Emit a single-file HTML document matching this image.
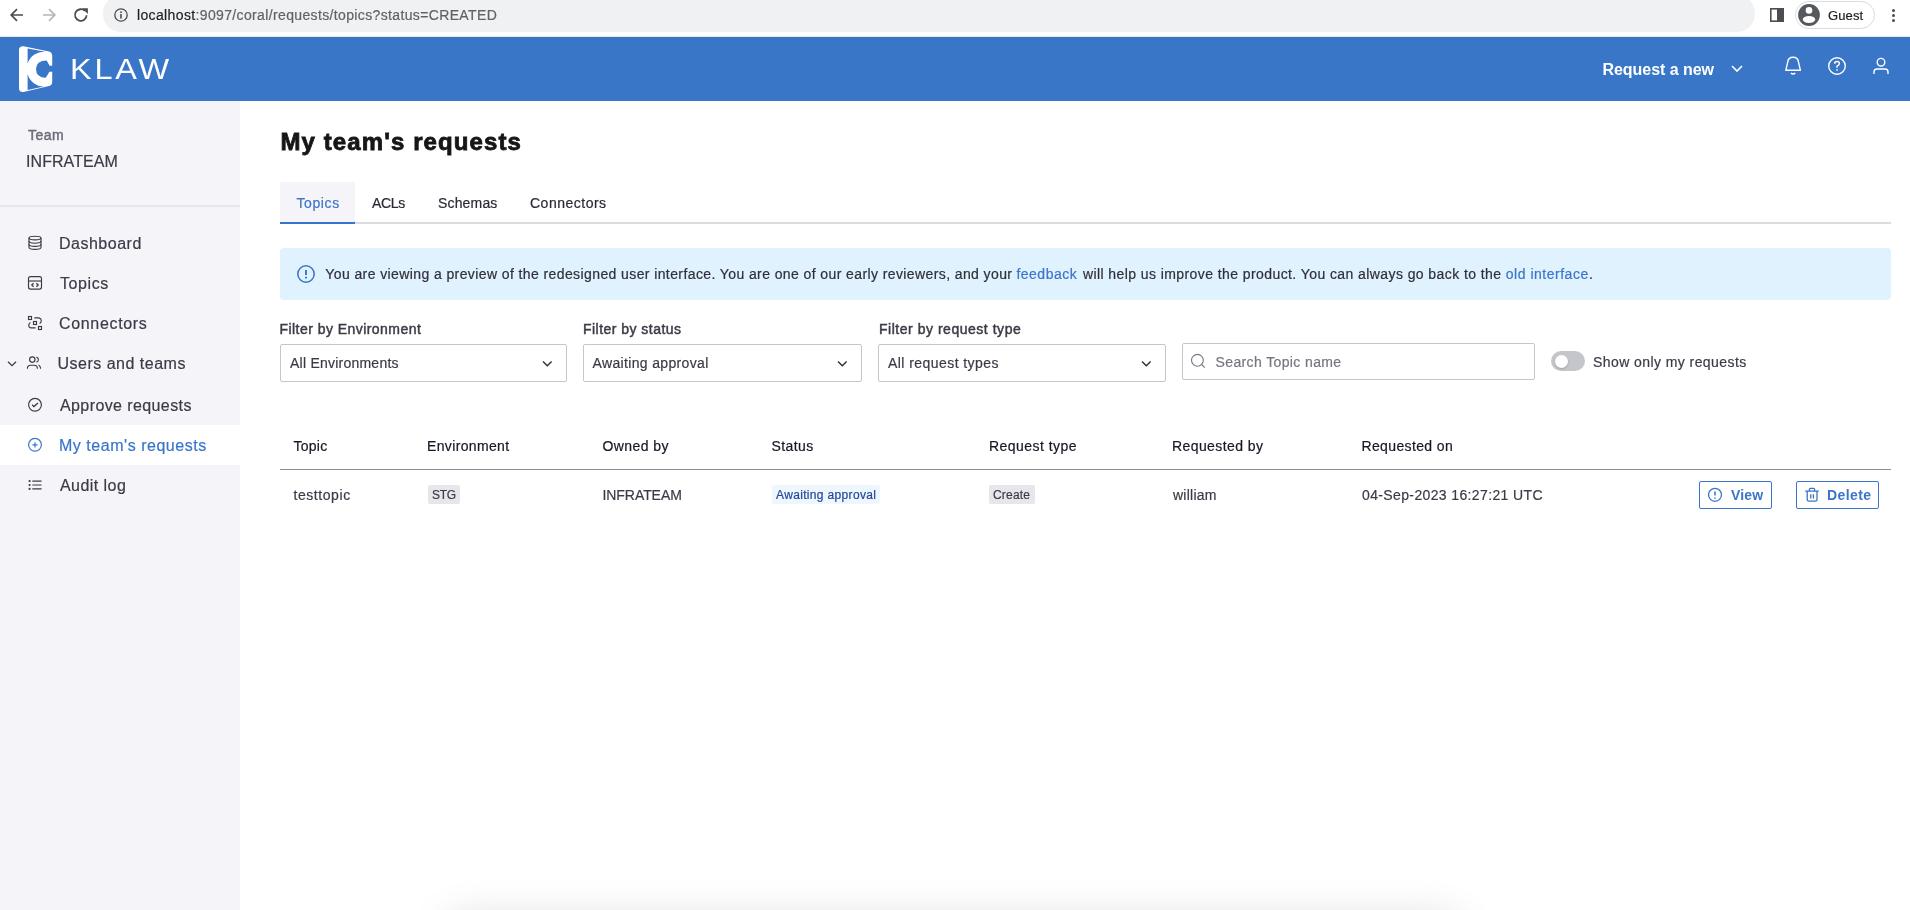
<!DOCTYPE html>
<html><head><meta charset="utf-8">
<style>
*{margin:0;padding:0;box-sizing:border-box}
html,body{width:1910px;height:910px;overflow:hidden;background:#fff;font-family:"Liberation Sans",sans-serif;position:relative}
body{will-change:transform}
.a{position:absolute}
.t{position:absolute;white-space:nowrap;line-height:1;-webkit-text-stroke:0.2px currentColor}
.m{-webkit-text-stroke:0.45px currentColor}
svg{position:absolute;overflow:visible}
</style></head><body>
<!-- browser chrome -->
<div class="a" style="left:0;top:0;width:1910px;height:37px;background:#fff"></div>
<div class="a" style="left:103px;top:-5px;width:1652px;height:37px;border-radius:18px;background:#eff1f3"></div>
<svg style="left:10px;top:8px" width="14" height="14" viewBox="0 0 14 14"><path d="M13 7H1.5M7 1.2L1.2 7L7 12.8" fill="none" stroke="#4a4d51" stroke-width="1.7"/></svg>
<svg style="left:42px;top:8px" width="14" height="14" viewBox="0 0 14 14"><path d="M1 7H12.5M7 1.2L12.8 7L7 12.8" fill="none" stroke="#b4b6b9" stroke-width="1.7"/></svg>
<svg style="left:73px;top:7px" width="16" height="16" viewBox="0 0 16 16"><path d="M13.6 8.2A5.8 5.8 0 1 1 11.9 3.9" fill="none" stroke="#4a4d51" stroke-width="1.8"/><path d="M9 1.2H14.9V7.1Z" fill="#4a4d51"/></svg>
<svg style="left:114px;top:8px" width="14" height="14" viewBox="0 0 14 14"><circle cx="7" cy="7" r="6.2" fill="none" stroke="#4a4d51" stroke-width="1.3"/><rect x="6.2" y="6" width="1.6" height="4.6" fill="#4a4d51"/><rect x="6.2" y="3.4" width="1.6" height="1.6" fill="#4a4d51"/></svg>
<div class="t" id="url" style="left:137.0px;top:8px;font-size:14px;color:#1f1f1f;letter-spacing:0.360px">localhost<span style="color:#5f6368">:9097/coral/requests/topics?status=CREATED</span></div>
<svg style="left:1770px;top:8px" width="14" height="14" viewBox="0 0 14 14"><rect x="0.8" y="0.8" width="12.4" height="12.4" fill="none" stroke="#4a4d51" stroke-width="1.6"/><rect x="7" y="0" width="7" height="14" fill="#4a4d51"/></svg>
<div class="a" style="left:1795px;top:1px;width:80px;height:28px;border:1px solid #dadce0;border-radius:14px"></div>
<svg style="left:1798px;top:4px" width="22" height="22" viewBox="0 0 22 22"><circle cx="11" cy="11" r="10.9" fill="#55585d"/><circle cx="11" cy="6.4" r="3.3" fill="#fff"/><ellipse cx="11" cy="15.5" rx="6.2" ry="3.4" fill="#fff"/></svg>
<div class="t" id="guest" style="left:1828.0px;top:9px;font-size:13px;color:#1f1f1f;letter-spacing:0.125px">Guest</div>
<div class="a" style="left:1892px;top:9px;width:3px;height:3px;border-radius:2px;background:#4a4d51"></div>
<div class="a" style="left:1892px;top:14px;width:3px;height:3px;border-radius:2px;background:#4a4d51"></div>
<div class="a" style="left:1892px;top:19px;width:3px;height:3px;border-radius:2px;background:#4a4d51"></div>

<!-- app header -->
<div class="a" style="left:0;top:36px;width:1910px;height:1px;background:#e9e6e2"></div>
<div class="a" style="left:0;top:37px;width:1910px;height:64px;background:#3a76c8"></div>
<svg style="left:14px;top:42px" width="44" height="54" viewBox="14 42 44 54"><path d="M19 50Q19 46 23.5 46.3L49 51.4Q52.2 52.2 52.2 56V82Q52.2 85 49 86L23.5 92Q19 92.6 19 88Z" fill="#fff"/><path d="M27.6 48.4L45.5 51.8A17 17 0 0 0 27.6 63.6Z" fill="#3a76c8"/><path d="M27.6 74A17 17 0 0 0 43.8 86.6L27.6 89.9Z" fill="#3a76c8"/><path d="M46.7 60.4Q36 60.4 36 69Q36 77.6 45.8 77.8L49.4 71.7H53V65.8H49.6Z" fill="#3a76c8"/></svg>
<div class="t" id="klaw" style="left:70.0px;top:54px;font-size:29.5px;color:#fff;letter-spacing:2.534px;transform:scaleX(1.1);transform-origin:0 0;-webkit-text-stroke:0">KLAW</div>
<div class="t" id="reqnew" style="left:1602.5px;top:62px;font-size:16px;font-weight:bold;color:#fff;letter-spacing:-0.041px;-webkit-text-stroke:0">Request a new</div>
<svg style="left:1731px;top:65px" width="12" height="7" viewBox="0 0 12 7"><path d="M1 1L6 6L11 1" fill="none" stroke="#fff" stroke-width="1.6"/></svg>
<svg style="left:1780px;top:50px" width="26" height="30" viewBox="1780 50 26 30"><path d="M1785.8 70.3L1787.7 62.2Q1788.2 57.3 1793.1 57.3Q1798 57.3 1798.5 62.2L1800.4 70.3Z" fill="none" stroke="#fff" stroke-width="1.4" stroke-linejoin="round"/><path d="M1790.9 73.1Q1793.1 74.9 1795.3 73.1" fill="none" stroke="#fff" stroke-width="1.4"/></svg>
<svg style="left:1828px;top:57px" width="18" height="18" viewBox="0 0 18 18"><circle cx="9" cy="9" r="8.3" fill="none" stroke="#fff" stroke-width="1.4"/><path d="M6.6 6.8Q6.6 4.5 9 4.5Q11.4 4.5 11.4 6.6Q11.4 8 9 9.2V10.8" fill="none" stroke="#fff" stroke-width="1.4"/><rect x="8.3" y="12.2" width="1.4" height="1.6" fill="#fff"/></svg>
<svg style="left:1873px;top:57px" width="16" height="18" viewBox="0 0 16 18"><circle cx="8" cy="5.2" r="3.8" fill="none" stroke="#fff" stroke-width="1.4"/><path d="M1 17V15Q1 12 4 12H12Q15 12 15 15V17" fill="none" stroke="#fff" stroke-width="1.4"/></svg>

<!-- sidebar -->
<div class="a" style="left:0;top:101px;width:240px;height:809px;background:#f5f5f9"></div>

<div class="t m" id="team" style="left:28.0px;top:128px;font-size:14px;color:#6c6c78;letter-spacing:0.500px">Team</div>
<div class="t" id="infra" style="left:26.0px;top:154px;font-size:16px;color:#3b3b47;letter-spacing:0.065px">INFRATEAM</div>
<div class="a" style="left:0;top:205px;width:240px;height:2px;background:#e6e6ec"></div>
<div class="a" style="left:0;top:425px;width:240px;height:40px;background:#fff"></div>
<svg style="left:0;top:0" width="60" height="500" viewBox="0 0 60 500">
<g fill="none" stroke="#3b3b47" stroke-width="1.15">
<ellipse cx="35" cy="238" rx="6" ry="1.8"/>
<path d="M29 238V247.2Q29 249.4 35 249.4Q41 249.4 41 247.2V238"/>
<path d="M29 241Q29 243.2 35 243.2Q41 243.2 41 241"/>
<path d="M29 244.2Q29 246.4 35 246.4Q41 246.4 41 244.2"/>
<rect x="28.5" y="276.6" width="13" height="12.5" rx="2"/>
<path d="M28.5 281H41.5"/>
<path d="M33.6 283.3L31.8 285L33.6 286.7M36.4 283.3L38.2 285L36.4 286.7" stroke-width="1.3"/>
<rect x="28.5" y="316.5" width="3" height="3"/>
<rect x="33.5" y="321.5" width="3" height="3"/>
<rect x="38.5" y="326.5" width="3" height="3"/>
<path d="M34.3 317.9H39Q41.3 318.5 41.3 320.6Q41.3 322.6 39.6 323.4"/>
<path d="M30.4 322.5Q28.7 323.4 28.7 325.4Q28.7 327.4 30.8 327.9H35.6"/>
<path d="M8 361.8L12 365.6L16 361.8" stroke-width="1.3"/>
<circle cx="32.3" cy="359.6" r="2.7"/>
<path d="M36.4 357.1Q38.4 358 38.4 359.7Q38.4 361.4 36.4 362.3"/>
<path d="M27.4 368.8Q27.4 365.2 30.5 365.2H34.3Q37.4 365.2 37.4 368.8"/>
<path d="M38.6 364.9Q40.6 366 40.6 368.8"/>
<circle cx="35" cy="404.8" r="6.4"/>
<path d="M32.1 404.8L33.9 406.6L38 402.9" stroke-width="1.3"/>
</g>
<g fill="none" stroke="#3a75c9" stroke-width="1.15">
<circle cx="35" cy="444.8" r="6.4"/>
<path d="M32.4 444.9H37.6M35 442.3V447.5"/>
</g>
<g fill="#3b3b47">
<circle cx="29.6" cy="481.1" r="1.1"/><circle cx="29.6" cy="485" r="1.1"/><circle cx="29.6" cy="488.9" r="1.1"/>
</g>
<g stroke="#3b3b47" stroke-width="1.2">
<path d="M32.3 481.1H41.6M32.3 485H41.6M32.3 488.9H41.6"/>
</g>
</svg>
<div class="t" id="n1" style="left:59.0px;top:236px;font-size:16px;color:#3b3b47;letter-spacing:0.500px">Dashboard</div>
<div class="t" id="n2" style="left:60.0px;top:276px;font-size:16px;color:#3b3b47;letter-spacing:0.600px">Topics</div>
<div class="t" id="n3" style="left:59.0px;top:316px;font-size:16px;color:#3b3b47;letter-spacing:0.667px">Connectors</div>
<div class="t" id="n4" style="left:57.5px;top:356px;font-size:16px;color:#3b3b47;letter-spacing:0.499px">Users and teams</div>
<div class="t" id="n5" style="left:60.0px;top:398px;font-size:16px;color:#3b3b47;letter-spacing:0.400px">Approve requests</div>
<div class="t" id="n6" style="left:59.0px;top:438px;font-size:16px;color:#3a75c9;letter-spacing:0.531px">My team's requests</div>
<div class="t" id="n7" style="left:60.0px;top:478px;font-size:16px;color:#3b3b47;letter-spacing:0.440px">Audit log</div>

<!-- main -->
<div class="t" id="title" style="-webkit-text-stroke:0.8px #161616;left:280.5px;top:130px;font-size:24px;font-weight:bold;color:#161616;letter-spacing:1.089px">My team's requests</div>
<div class="a" style="left:280px;top:182px;width:75px;height:40px;background:#f5f5f9"></div>
<div class="a" style="left:280px;top:222px;width:75px;height:2px;background:#3573cc"></div>
<div class="a" style="left:355px;top:222px;width:1536px;height:2px;background:#dcdce0"></div>
<div class="t" id="tab1" style="left:296.5px;top:196px;font-size:14px;color:#3a75c9;letter-spacing:0.600px">Topics</div>
<div class="t" id="tab2" style="left:372.0px;top:196px;font-size:14px;color:#2a2a35;letter-spacing:-0.333px">ACLs</div>
<div class="t" id="tab3" style="left:438.0px;top:196px;font-size:14px;color:#2a2a35;letter-spacing:0.166px">Schemas</div>
<div class="t" id="tab4" style="left:530.0px;top:196px;font-size:14px;color:#2a2a35;letter-spacing:0.500px">Connectors</div>

<div class="a" style="left:280px;top:248px;width:1611px;height:52px;background:#e0f2fe;border-radius:4px"></div>
<svg style="left:296px;top:264px" width="20" height="20" viewBox="296 264 20 20"><circle cx="306" cy="274" r="8.2" fill="none" stroke="#3a75c9" stroke-width="1.5"/><path d="M306 270V275M306 276.8V278.6" stroke="#3a75c9" stroke-width="1.9"/></svg>
<div class="t" id="bs1" style="left:325.3px;top:267px;font-size:14px;color:#2f2f3a;letter-spacing:0.401px">You are viewing a preview of the redesigned user interface. You are one of our early reviewers, and your</div>
<div class="t" id="bs2" style="left:1016.4px;top:267px;font-size:14px;color:#3a75c9;letter-spacing:0.5px">feedback</div>
<div class="t" id="bs3" style="left:1082.9px;top:267px;font-size:14px;color:#2f2f3a;letter-spacing:0.418px">will help us improve the product. You can always go back to the</div>
<div class="t" id="bs4" style="left:1505.8px;top:267px;font-size:14px;color:#3a75c9;letter-spacing:0.509px">old interface</div>
<div class="t" id="bs5" style="left:1589px;top:267px;font-size:14px;color:#2f2f3a">.</div>

<div class="t m" id="l1" style="left:279.5px;top:322px;font-size:14px;color:#3b3b47;letter-spacing:0.450px">Filter by Environment</div>
<div class="t m" id="l2" style="left:583.0px;top:322px;font-size:14px;color:#3b3b47;letter-spacing:0.467px">Filter by status</div>
<div class="t m" id="l3" style="left:879.0px;top:322px;font-size:14px;color:#3b3b47;letter-spacing:0.524px">Filter by request type</div>
<div class="a" style="left:280px;top:344px;width:287px;height:38px;border:1px solid #c5c5cc;border-radius:2px"></div>
<div class="a" style="left:583px;top:344px;width:279px;height:38px;border:1px solid #c5c5cc;border-radius:2px"></div>
<div class="a" style="left:878px;top:344px;width:288px;height:38px;border:1px solid #c5c5cc;border-radius:2px"></div>
<div class="a" style="left:1182px;top:343px;width:353px;height:37px;border:1px solid #c5c5cc;border-radius:2px"></div>
<div class="t" id="v1" style="left:290.0px;top:356px;font-size:14px;color:#3b3b47;letter-spacing:0.233px">All Environments</div>
<div class="t" id="v2" style="left:592.5px;top:356px;font-size:14px;color:#3b3b47;letter-spacing:0.343px">Awaiting approval</div>
<div class="t" id="v3" style="left:888.0px;top:356px;font-size:14px;color:#3b3b47;letter-spacing:0.438px">All request types</div>
<svg style="left:0;top:0" width="1200" height="400" viewBox="0 0 1200 400"><g fill="none" stroke="#2f2f3a" stroke-width="1.4"><path d="M543 361.6L547.3 365.8L551.6 361.6"/><path d="M838 361.6L842.3 365.8L846.6 361.6"/><path d="M1142 361.6L1146.3 365.8L1150.6 361.6"/></g>
<g fill="none" stroke="#7a7a86" stroke-width="1.1"><circle cx="1197.4" cy="360.3" r="5.9"/><path d="M1201.6 364.5L1204.8 367.7"/></g></svg>
<div class="t" id="search" style="left:1215.5px;top:355px;font-size:14px;color:#767682;letter-spacing:0.377px">Search Topic name</div>
<div class="a" style="left:1551px;top:351px;width:34px;height:20px;border-radius:10px;background:#c5c5cc"></div>
<div class="a" style="left:1555px;top:355px;width:12.5px;height:12.5px;border-radius:7px;background:#fff;box-shadow:0 1px 2px rgba(0,0,0,.2)"></div>
<div class="t" id="toggle" style="left:1593.0px;top:355px;font-size:14px;color:#3b3b47;letter-spacing:0.425px">Show only my requests</div>

<div class="t" id="h1" style="left:293.5px;top:439px;font-size:14px;color:#161825;letter-spacing:0.250px">Topic</div>
<div class="t" id="h2" style="left:427.0px;top:439px;font-size:14px;color:#161825;letter-spacing:0.350px">Environment</div>
<div class="t" id="h3" style="left:602.5px;top:439px;font-size:14px;color:#161825;letter-spacing:0.428px">Owned by</div>
<div class="t" id="h4" style="left:771.5px;top:439px;font-size:14px;color:#161825;letter-spacing:0.400px">Status</div>
<div class="t" id="h5" style="left:989.0px;top:439px;font-size:14px;color:#161825;letter-spacing:0.455px">Request type</div>
<div class="t" id="h6" style="left:1172.0px;top:439px;font-size:14px;color:#161825;letter-spacing:0.408px">Requested by</div>
<div class="t" id="h7" style="left:1361.5px;top:439px;font-size:14px;color:#161825;letter-spacing:0.364px">Requested on</div>
<div class="a" style="left:280px;top:469px;width:1611px;height:1px;background:#8d8d99"></div>

<div class="t" id="r1" style="left:293.5px;top:488px;font-size:14px;color:#3b3b47;letter-spacing:0.562px">testtopic</div>
<div class="a" style="left:428px;top:485px;width:32px;height:19px;border-radius:2px;background:#e6e6eb"></div>
<div class="t" id="r2" style="left:432.0px;top:489px;font-size:12px;color:#3b3b47;letter-spacing:-0.250px">STG</div>
<div class="t" id="r3" style="left:602.5px;top:488px;font-size:14px;color:#3b3b47;letter-spacing:-0.065px">INFRATEAM</div>
<div class="a" style="left:772px;top:485px;width:108px;height:19px;border-radius:2px;background:#eff7fe"></div>
<div class="t" id="r4" style="left:776.0px;top:489px;font-size:12px;color:#23479a;letter-spacing:0.343px">Awaiting approval</div>
<div class="a" style="left:989px;top:485px;width:46px;height:19px;border-radius:2px;background:#e6e6eb"></div>
<div class="t" id="r5" style="left:993.0px;top:489px;font-size:12px;color:#3b3b47;letter-spacing:0.200px">Create</div>
<div class="t" id="r6" style="left:1173.0px;top:488px;font-size:14px;color:#3b3b47;letter-spacing:0.249px">william</div>
<div class="t" id="r7" style="left:1362.0px;top:488px;font-size:14px;color:#3b3b47;letter-spacing:0.369px">04-Sep-2023 16:27:21 UTC</div>
<div class="a" style="left:1699px;top:481px;width:73px;height:28px;border:1px solid #3a75c9;border-radius:2px"></div>
<div class="a" style="left:1796px;top:481px;width:83px;height:28px;border:1px solid #3a75c9;border-radius:2px"></div>
<svg style="left:1700px;top:482px" width="180" height="26" viewBox="1700 482 180 26"><g fill="none" stroke="#3a75c9" stroke-width="1.3"><circle cx="1715" cy="494.8" r="6.5"/><path d="M1715 491.6V495.6M1715 497.4V498.8" stroke-width="1.5"/>
<path d="M1805.2 491.2H1818.8M1809.4 491V489.4Q1809.4 488.4 1810.4 488.4H1813.6Q1814.6 488.4 1814.6 489.4V491M1807.2 491.2V499.4Q1807.2 501.2 1809 501.2H1815.2Q1817 501.2 1817 499.4V491.2M1810.8 494.3V498.4M1813.4 494.3V498.4"/></g></svg>
<div class="t" id="b1" style="left:1731.0px;top:488px;font-size:14px;font-weight:bold;color:#3a75c9;letter-spacing:0.168px;-webkit-text-stroke:0">View</div>
<div class="t" id="b2" style="left:1827.0px;top:488px;font-size:14px;font-weight:bold;color:#3a75c9;letter-spacing:0.400px;-webkit-text-stroke:0">Delete</div>
<div class="a" style="left:448px;top:918px;width:1010px;height:60px;border-radius:4px;background:#fff;box-shadow:0 0 40px rgba(0,0,0,0.14)"></div>
</body></html>
